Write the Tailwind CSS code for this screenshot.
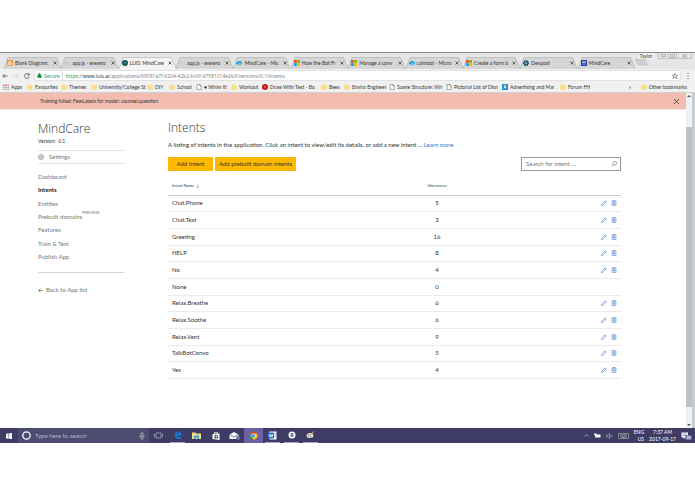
<!DOCTYPE html>
<html lang="en">
  <head>
    <meta charset="UTF-8" />
    <meta name="viewport" content="width=device-width, initial-scale=1.0" />
    <title>LUIS: MindCare</title>
    <script src="https://cdn.jsdelivr.net/npm/@tailwindcss/browser@4"></script>
  </head>
  <body class="bg-white font-['Lato','Open_Sans',sans-serif] text-[6px] leading-[8px] text-[#444]">
    <!-- shared icons -->
    <svg class="hidden">
      <symbol id="blank" viewBox="0 0 16 16">
        <rect width="16" height="16" rx="2" fill="#f08a24" />
        <path d="M5 3h6v3H5zM2 10h5v3H2zM9 10h5v3H9zM8 6v2M4 10V8h8v2" fill="none" stroke="#fff" stroke-width="1.5" />
      </symbol>
      <symbol id="code" viewBox="0 0 16 16">
        <path d="M5 4L1 8l4 4M11 4l4 4-4 4M9 3L7 13" fill="none" stroke="#d8b490" stroke-width="1.5" />
      </symbol>
      <symbol id="luis" viewBox="0 0 16 16">
        <circle cx="8" cy="8" r="8" fill="#134a56" />
        <path d="M6 4v8M10 4v8M3 8h3M10 8h3" stroke="#5fa5ae" stroke-width="1.5" />
      </symbol>
      <symbol id="cloud" viewBox="0 0 16 16">
        <path d="M3 12a3 3 0 010-6 4 4 0 017-2 4 4 0 013 8z" fill="#1c9ad6" />
        <path d="M6 14a3 3 0 010-5 3 3 0 015-1 3 3 0 012 6z" fill="#63c3ee" />
      </symbol>
      <symbol id="ms" viewBox="0 0 16 16">
        <path d="M0 0h7.500v7.500H0z" fill="#f25022" /><path d="M8.500 0H16v7.500H8.500z" fill="#7fba00" />
        <path d="M0 8.500h7.500V16H0z" fill="#00a4ef" /><path d="M8.500 8.500H16V16H8.500z" fill="#ffb900" />
      </symbol>
      <symbol id="devpost" viewBox="0 0 16 16">
        <path d="M4 1h8l4 7-4 7H4L0 8z" fill="#003e54" />
        <path d="M6 5h2a3 3 0 010 6H6z" fill="none" stroke="#fff" stroke-width="1.500" />
      </symbol>
      <symbol id="mind" viewBox="0 0 16 16">
        <rect width="16" height="16" fill="#2a3eb1" />
        <path d="M4 4h3v3H4zM9 4h3v3H9zM4 11h8" fill="none" stroke="#fff" stroke-width="1.500" />
      </symbol>
      <symbol id="folder" viewBox="0 0 16 16"><path d="M1 1h7l1 2h6v12H1z" fill="#fbdf83" /></symbol>
      <symbol id="page" viewBox="0 0 16 16">
        <path d="M3 1h7l4 4v10H3zM10 1v4h4" fill="#fff" stroke="#666" stroke-width="1.500" />
      </symbol>
      <symbol id="apps" viewBox="0 0 16 16">
        <path d="M0 1h4v4H0zM6 1h4v4H6z" fill="#e06a5e" /><path d="M12 1h4v4h-4zM0 7h4v4H0z" fill="#d98a80" />
        <path d="M6 7h4v4H6zM12 7h4v4h-4z" fill="#8fa7d0" /><path d="M0 13h4v3H0zM6 13h4v3H6zM12 13h4v3h-4z" fill="#8fb98a" />
      </symbol>
      <symbol id="red" viewBox="0 0 16 16">
        <circle cx="8" cy="8" r="8" fill="#c4161c" /><circle cx="8" cy="8" r="3" fill="#e0555a" />
      </symbol>
      <symbol id="ad" viewBox="0 0 16 16">
        <rect width="16" height="16" fill="#1d8fd1" /><path d="M3 3l5 4 5-4-3 5 3 5-5-3-5 3 3-5z" fill="#fff" />
        <circle cx="8" cy="3" r="2" fill="#f5d84c" />
      </symbol>
      <symbol id="pencil" viewBox="0 0 16 16">
        <path d="M1 15l1-4 9-9 3 3-9 9zM9 4l3 3" fill="none" stroke="#3a76cf" stroke-width="1.500" />
      </symbol>
      <symbol id="trash" viewBox="0 0 16 16">
        <path d="M2 3h12M6 3V1h4v2M3 3v12h10V3M6 6v6M8 6v6M10 6v6" fill="none" stroke="#3a76cf" stroke-width="1.500" />
      </symbol>
    </svg>

    <div class="pt-[52px]">
      <div class="border-t border-[#8a8a8a] bg-[#e6e6e6]">
        <!-- tab strip -->
        <div class="flex h-4 items-end">
          <div id="tabs" class="flex h-3 min-w-0 flex-1 pl-[4px] text-[5px] text-[#333]"></div>
          <svg class="h-2 w-[13px] mb-[3px]" viewBox="0 0 13 8"><path d="M0 1h9l4 6H3z" fill="#d0d0d0" stroke="#bbb" stroke-width=".5" /></svg>
          <div class="flex w-[47px] items-start gap-[4px] self-start text-[5px] leading-[6px]">
            <button class="-ml-[10px] w-[16px] bg-[#f0f0f0]">Taylor</button>
            <div class="flex border border-t-0 border-[#c4c4c4]">
              <button class="flex h-[5px] w-[9px] items-center justify-center" aria-label="Minimize">
                <svg class="h-[3px] w-[5px]" viewBox="0 0 5 3"><path d="M.5.500h4v2h-4z" fill="none" stroke="#999" stroke-width=".7" /></svg>
              </button>
              <button class="flex h-[5px] w-[9px] items-center justify-center border-x border-[#c4c4c4]" aria-label="Restore">
                <svg class="h-[4px] w-[5px]" viewBox="0 0 5 4"><path d="M.5.500h4v3h-4zM2 2h1" fill="none" stroke="#999" stroke-width=".7" /></svg>
              </button>
              <button class="flex h-[5px] w-[14px] items-center justify-center" aria-label="Close">
                <svg class="h-[4px] w-[5px]" viewBox="0 0 5 4"><path d="M.5.500l4 3M4.500.500l-4 3" stroke="#999" stroke-width=".9" /></svg>
              </button>
            </div>
          </div>
        </div>

        <!-- address bar -->
        <div class="flex h-[13px] items-center bg-[#f1f1f1] pr-[5px] font-['Open_Sans',sans-serif] text-[5px]">
          <div class="flex w-[34px] items-center gap-[5px] pl-[2px]">
            <svg class="size-[6px]" viewBox="0 0 16 16"><path d="M15 8H2M7 3L2 8l5 5" fill="none" stroke="#444" stroke-width="2" /></svg>
            <svg class="size-[6px]" viewBox="0 0 16 16"><path d="M1 8h13M9 3l5 5-5 5" fill="none" stroke="#ccc" stroke-width="2" /></svg>
            <svg class="size-[6px]" viewBox="0 0 16 16"><path d="M13 4a6.500 6.500 0 101 6M14 1v5H9" fill="none" stroke="#444" stroke-width="2" /></svg>
          </div>
          <div class="flex h-[11px] min-w-0 flex-1 items-center rounded-xs border border-[#e2e2e2] bg-white px-[2px]">
            <svg class="size-[5px]" viewBox="0 0 16 16"><path d="M2 7h12v8H2zM5 7V4a3 3 0 016 0v3" fill="#128a43" stroke="#128a43" stroke-width="1" /></svg>
            <span class="ml-[2px] w-[18px] text-[#128a43]">Secure</span>
            <span class="mr-[3px] h-2 w-px bg-[#ddd]"></span>
            <span class="flex-1 whitespace-nowrap text-[#777]"><span class="text-[#128a43]">https</span>://<span class="text-[#222]">www.luis.ai</span>/applications/69081a7f-6204-42b2-bc0f-d7581014e2b3/versions/0.1/intents</span>
            <svg class="size-[6px]" viewBox="0 0 16 16"><path d="M8 1l2 5h5l-4 3 2 6-5-4-5 4 2-6-4-3h5z" fill="none" stroke="#555" stroke-width="1.500" /></svg>
          </div>
          <svg class="ml-[5px] h-[6px] w-[4px]" viewBox="0 0 4 6"><path d="M1.500 0h1v1h-1zM1.500 2.500h1v1h-1zM1.500 5h1v1h-1z" fill="#555" /></svg>
        </div>

        <!-- bookmarks -->
        <div class="flex h-[11px] items-center border-b border-[#d0d0d0] bg-[#f1f1f1] pl-[3px] pr-[8px] text-[5px] text-[#333]">
          <div id="bookmarks" class="flex min-w-0 flex-1"></div>
          <span class="w-[12px]">»</span>
          <a href="#" class="flex items-center gap-[2px] whitespace-nowrap"><svg class="size-[6px]"><use href="#folder" /></svg>Other bookmarks</a>
        </div>
      </div>

      <!-- page -->
      <div class="flex border-r-[3px] border-[#c6cdd3]">
        <div class="min-w-0 flex-1">
          <div class="flex h-[17px] items-center justify-between border-b border-[#fbe3dc] bg-[#f2bdb0] pl-[40px] pr-[6px] text-[5px] text-[#333]">
            <span>Training failed: FewLabels for model: counsel.question</span>
            <button aria-label="Dismiss"><svg class="size-[7px]" viewBox="0 0 7 7"><path d="M1 1l5 5M6 1L1 6" stroke="#333" stroke-width=".8" /></svg></button>
          </div>

          <div class="flex pl-[38px] pr-[65px]">
            <aside class="w-[87px] pt-[11px] text-[#777]">
              <h2 class="font-['Open_Sans',sans-serif] text-[12px] leading-[16px] font-light text-[#333]">MindCare</h2>
              <p class="text-[5px] leading-[8px] text-[#333]">Version: &nbsp;0.1</p>
              <a href="#" class="mt-[5px] flex h-[14px] items-center gap-[5px] border-y border-[#e4e4e4]">
                <svg class="size-[6px]" viewBox="0 0 16 16"><circle cx="8" cy="8" r="6.500" fill="none" stroke="#777" stroke-width="2" /><circle cx="8" cy="8" r="2.500" fill="none" stroke="#777" stroke-width="1.500" /></svg>
                Settings
              </a>
              <nav class="mt-[6px] grid h-[94px] grid-rows-7 items-center">
                <a href="#">Dashboard</a>
                <a href="#" class="font-bold text-[#222]">Intents</a>
                <a href="#">Entities</a>
                <a href="#" class="flex whitespace-nowrap">Prebuilt domains<span class="-mt-[4px] text-[4px]">PREVIEW</span></a>
                <a href="#">Features</a>
                <a href="#">Train &amp; Test</a>
                <a href="#">Publish App</a>
              </nav>
              <a href="#" class="mt-[8px] flex items-center gap-[3px] border-t border-[#d8d8d8] pt-[13px]">
                <svg class="size-[5px]" viewBox="0 0 16 16"><path d="M16 8H2M8 2L2 8l6 6" fill="none" stroke="#555" stroke-width="2" /></svg>
                Back to App list
              </a>
            </aside>

            <main class="ml-[43px] min-w-0 flex-1 pt-[9px] text-[#333]">
              <h1 class="font-['Open_Sans',sans-serif] text-[12px] leading-[18px] font-light">Intents</h1>
              <p class="mt-[4px] whitespace-nowrap">A listing of intents in the application. Click an intent to view/edit its details, or add a new intent ... <a href="#" class="text-[#2a76d2]">Learn more</a></p>
              <div class="mt-[8px] flex h-[14px] items-stretch gap-[2px]">
                <button class="w-[45px] bg-[#ffb900]">Add Intent</button>
                <button class="w-[81px] bg-[#ffb900]">Add prebuilt domain intents</button>
                <label class="ml-auto flex w-[100px] items-center border border-[#999] pl-[4px] pr-[3px]">
                  <input type="text" aria-label="Search for intent" placeholder="Search for intent ..." class="min-w-0 flex-1 outline-none placeholder:text-[#777]" />
                  <svg class="size-[6px]" viewBox="0 0 16 16"><circle cx="10" cy="6" r="5" fill="none" stroke="#666" stroke-width="1.500" /><path d="M6 10l-5 5" stroke="#666" stroke-width="1.500" /></svg>
                </label>
              </div>
              <table class="mt-[7px] h-[201px] w-full table-fixed">
                <thead class="text-[4px] leading-[6px] text-[#333]">
                  <tr class="h-[17px] border-b border-[#ccc]">
                    <th class="w-[234px] pl-[4px] text-left font-normal">Intent Name &nbsp;↓</th>
                    <th class="w-[70px] font-normal">Utterances</th>
                    <th aria-label="Actions"></th>
                  </tr>
                </thead>
                <tbody id="intents"></tbody>
              </table>
            </main>
          </div>
        </div>

        <!-- scrollbar -->
        <div class="flex h-[335px] w-[6px] flex-col items-center bg-[#f1f1f1]">
          <svg class="my-[1px] h-[4px] w-[4px]" viewBox="0 0 4 4"><path d="M0 3l2-2 2 2z" fill="#555" /></svg>
          <div class="mt-[28px] w-full flex-1 bg-[#c1c1c1]"></div>
          <svg class="mt-[16px] mb-[1px] h-[4px] w-[4px]" viewBox="0 0 4 4"><path d="M0 1l2 2 2-2z" fill="#555" /></svg>
        </div>
      </div>

      <!-- taskbar -->
      <div class="flex h-[15px] items-center bg-[#3e3c64] text-[#ddd]">
        <div class="flex w-[18px] justify-center">
          <svg class="size-[6px]" viewBox="0 0 16 16"><path d="M0 2l7-1v6H0zM8 1l8-1v7H8zM0 8h7v7l-7-1zM8 8h8v8l-8-1z" fill="#fff" /></svg>
        </div>
        <label class="flex h-full w-[131px] items-center gap-[4px] bg-[#4c4b70] px-[4px]">
          <svg class="size-[9px]" viewBox="0 0 9 9"><circle cx="4.500" cy="4.500" r="3.700" fill="none" stroke="#fff" stroke-width="1.300" /></svg>
          <input type="text" aria-label="Search" placeholder="Type here to search" class="min-w-0 flex-1 placeholder:text-[#b9b9c9] outline-none" />
          <svg class="h-[8px] w-[6px]" viewBox="0 0 12 16"><path d="M4 2h4v7H4zM2 7v2a4 4 0 008 0V7M6 13v3" fill="none" stroke="#ccc" stroke-width="1.300" /></svg>
        </label>
        <div class="flex h-full *:flex *:items-center *:justify-center">
          <button class="mx-[2px] w-[15px]" aria-label="Task view"><svg class="h-[7px] w-[9px]" viewBox="0 0 18 14"><path d="M4 2h10v10H4zM2 4H1v6h1M16 4h1v6h-1" fill="none" stroke="#aaa9c0" stroke-width="1.500" /></svg></button>
          <button class="mx-[2px] w-[15px] border-b border-[#a9a7d8]" aria-label="Edge"><svg class="size-[8px]" viewBox="0 0 16 16"><path d="M1 8C2 3 5 1 8 1c5 0 7 4 7 8H5c0 4 5 5 9 3v3c-6 2-12 0-12-6 0-3 2-5 5-6-1 1-2 2-2 3h6c0-5-7-4-10 2z" fill="#0f82e6" /></svg></button>
          <button class="mx-[2px] w-[15px]" aria-label="File Explorer"><svg class="h-[7px] w-[9px]" viewBox="0 0 18 14"><path d="M0 1h7l1 2h10v11H0z" fill="#f7dc84" /><path d="M4 7h10v7h-3v-3H7v3H4z" fill="#3aa5c8" /></svg></button>
          <button class="mx-[2px] w-[15px]" aria-label="Store"><svg class="size-[8px]" viewBox="0 0 16 16"><path d="M5 5V1h6v4" fill="none" stroke="#fff" stroke-width="1.500" /><path d="M1 4l14-1v13L1 14z" fill="#fff" /><path d="M5 6h3v3H5zM9 6h3v3H9zM5 10h3v3H5zM9 10h3v3H9z" fill="#3e3c64" /></svg></button>
          <button class="mx-[2px] w-[15px]" aria-label="Mail"><svg class="h-[8px] w-[11px]" viewBox="0 0 22 16"><path d="M1 5l9-5 9 5v9H1z" fill="#fff" /><path d="M2 5l8 5 8-5" fill="none" stroke="#3e3c64" stroke-width="1.500" /><circle cx="18" cy="12" r="4" fill="#7472a8" /></svg></button>
          <button class="w-[19px] bg-[#6863a5]" aria-label="Chrome"><svg class="size-[9px]" viewBox="0 0 18 18"><circle cx="9" cy="9" r="8" fill="#e34133" /><path d="M9 9L2 5a8 8 0 006 12z" fill="#30a853" /><path d="M9 9h0l-1 8A8 8 0 0016 5H9z" fill="#fbc116" /><circle cx="9" cy="9" r="4" fill="#fff" /><circle cx="9" cy="9" r="3" fill="#4285f4" /></svg></button>
          <button class="mx-[2px] w-[15px] border-b border-[#a9a7d8]" aria-label="Word"><svg class="size-[9px]" viewBox="0 0 18 18"><path d="M3 1h14v16H3z" fill="#fff" /><path d="M0 3h12v12H0z" fill="#2b6cc4" /><path d="M2 6l2 6 2-5 2 5 2-6" fill="none" stroke="#fff" stroke-width="1.500" /><path d="M13 5h3M13 8h3M13 11h3" stroke="#2b6cc4" /></svg></button>
          <button class="mx-[2px] w-[15px] border-b border-[#a9a7d8]" aria-label="Slack"><svg class="size-[8px]" viewBox="0 0 16 16"><circle cx="8" cy="8" r="7" fill="#fff" /><path d="M5 6l6-1M5 10l6-1M6 4l1 8M9 4l1 8" stroke="#3e3c64" stroke-width="1.300" /></svg></button>
          <button class="mx-[2px] w-[15px] border-b border-[#a9a7d8]" aria-label="Paint"><svg class="h-[8px] w-[9px]" viewBox="0 0 18 16"><ellipse cx="8" cy="9" rx="7" ry="5" fill="#d6dfe0" /><path d="M8 8l8-7" stroke="#e0b070" stroke-width="2" /><circle cx="5" cy="8" r="1.500" fill="#b55" /><circle cx="9" cy="11" r="1.500" fill="#5a5" /></svg></button>
        </div>
        <div class="ml-auto flex items-center gap-[5px] pr-[6px] text-[5px] leading-[7px] text-white">
          <svg class="size-[5px]" viewBox="0 0 16 16"><path d="M2 11l6-6 6 6" fill="none" stroke="#ddd" stroke-width="2" /></svg>
          <svg class="h-[5px] w-[7px]" viewBox="0 0 14 10"><path d="M2 3h11v6H2zM0 1h5v3H0z" fill="#fff" /></svg>
          <svg class="h-[6px] w-[7px]" viewBox="0 0 14 12"><path d="M1 4h3l3-3v10L4 8H1zM9 4l4 4M13 4L9 8" fill="none" stroke="#bbb" stroke-width="1.200" /></svg>
          <svg class="h-[6px] w-[11px]" viewBox="0 0 22 12"><path d="M1 1h20v10H1zM4 4h14M4 6h14M6 9h10" fill="none" stroke="#bbb" stroke-width="1.200" /></svg>
          <div class="text-right">ENG<br />US</div>
          <div class="whitespace-nowrap text-center">7:37 AM<br />2017-09-17</div>
          <div class="relative">
            <svg class="block size-[8px]" viewBox="0 0 16 16"><path d="M1 1h13v10H8l-3 3v-3H1z" fill="#fff" /><path d="M3 4h9M3 7h9" stroke="#3e3c64" /></svg>
            <span class="absolute left-[4px] top-[3px] rounded-full bg-[#7472a8] px-px text-[4px] leading-[5px]">28</span>
          </div>
        </div>
      </div>
    </div>

    <script>
      const tabs = [
        ["blank", "Blank Diagram:"],
        ["code", "app.js - wwwro"],
        ["luis", "LUIS: MindCare"],
        ["code", "app.js - wwwro"],
        ["cloud", "MindCare - Mic"],
        ["ms", "How the Bot Fr"],
        ["ms", "Manage a conv"],
        ["cloud", "calmbot - Micro"],
        ["ms", "Create a form b"],
        ["devpost", "Devpost"],
        ["mind", "MindCare"],
      ];
      // icon, label, width of the whole entry
      const bookmarks = [
        ["apps", "Apps", 24],
        ["folder", "Favourites", 34],
        ["folder", "Themes", 30],
        ["folder", "University/College St", 56],
        ["folder", "DIY", 22],
        ["folder", "School", 27],
        ["page", "● Whim It!", 35],
        ["folder", "Workout", 31],
        ["red", "Draw With Text - Bo", 59],
        ["folder", "Bees", 23],
        ["folder", "Enviro Engineer", 45],
        ["page", "Scene Structure: Wri", 57],
        ["page", "Pictorial List of Disn", 56],
        ["ad", "Advertising and Mar", 58],
        ["folder", "Forum FH", 40],
      ];
      const intents = [
        ["Chat.Phone", 5],
        ["Chat.Text", 3],
        ["Greeting", 16],
        ["HELP", 8],
        ["No", 4],
        ["None", 0],
        ["Relax.Breathe", 6],
        ["Relax.Soothe", 6],
        ["Relax.Vent", 9],
        ["TalkBotConvo", 5],
        ["Yes", 4],
      ];

      document.getElementById("tabs").innerHTML = tabs
        .map(
          ([icon, label], i) => `
          <div class="relative flex min-w-0 flex-1 items-center pl-[3px] pr-[4px]">
            <svg class="absolute inset-0 h-full w-full" viewBox="0 0 58 12" preserveAspectRatio="none">
              <path d="M0 12L4 .5h49l5 11.500" fill="${i === 2 ? "#f4f4f4" : "#d6d6d6"}" stroke="#aaa" stroke-width=".6" />
            </svg>
            <svg class="relative size-[6px] shrink-0"><use href="#${icon}" /></svg>
            <span class="relative ml-[2px] min-w-0 flex-1 whitespace-nowrap">${label}</span>
            <button class="relative" aria-label="Close tab">
              <svg class="size-[4px]" viewBox="0 0 4 4"><path d="M.5.500l3 3M3.500.500l-3 3" stroke="#444" stroke-width=".8" /></svg>
            </button>
          </div>`
        )
        .join("");

      document.getElementById("bookmarks").innerHTML = bookmarks
        .map(
          ([icon, label, width]) => `
          <a href="#" class="flex shrink-0 items-center gap-[2px] whitespace-nowrap" style="width: ${width}px">
            <svg class="size-[6px] shrink-0"><use href="#${icon}" /></svg>
            ${label}
          </a>`
        )
        .join("");

      document.getElementById("intents").innerHTML = intents
        .map(
          ([name, count]) => `
          <tr class="border-b border-[#ebebeb]">
            <td class="pl-[4px]">${name}</td>
            <td class="text-center">${count}</td>
            <td class="pr-[4px]">
              ${
                name === "None"
                  ? ""
                  : `<div class="flex justify-end gap-[4px]">
                <button aria-label="Edit ${name}"><svg class="size-[6px]"><use href="#pencil" /></svg></button>
                <button aria-label="Delete ${name}"><svg class="size-[6px]"><use href="#trash" /></svg></button>
              </div>`
              }
            </td>
          </tr>`
        )
        .join("");
    </script>
  </body>
</html>
